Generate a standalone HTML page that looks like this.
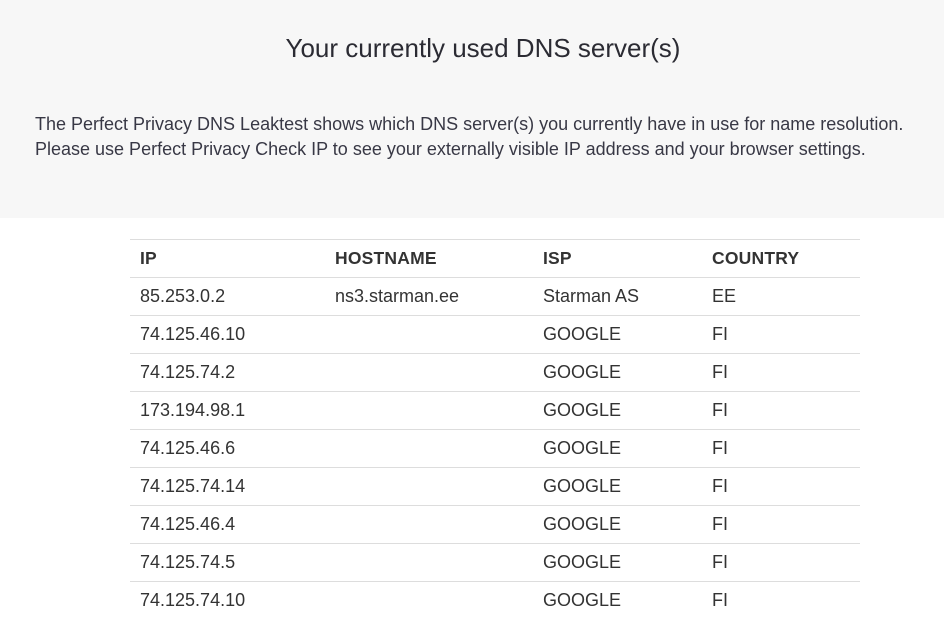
<!DOCTYPE html>
<html><head><style>
body{margin:0;background:#fff;font-family:"Liberation Sans",Arial,sans-serif;color:#333;width:944px;height:617px;overflow:hidden}
.top{background:#f7f7f7;height:218px;position:relative}
h1{position:absolute;top:31px;left:0;width:944px;text-align:center;margin:0;font-weight:normal;font-size:26px;color:#2b2b33;line-height:34px;padding-left:22px;box-sizing:border-box}
p{position:absolute;top:112px;left:35px;margin:0;font-size:18px;line-height:25px;color:#383845;white-space:nowrap}
table{position:absolute;top:239px;left:130px;width:730px;border-collapse:collapse;font-size:18px}
td,th{border-top:1px solid #ddd;height:37px;padding:0 0 0 10px;text-align:left;vertical-align:middle}
th{font-weight:bold;color:#333;font-size:17.5px;letter-spacing:0.2px}
td{color:#333}
</style></head><body>
<div class="top"><h1>Your currently used DNS server(s)</h1>
<p>The Perfect Privacy DNS Leaktest shows which DNS server(s) you currently have in use for name resolution.<br>Please use Perfect Privacy Check IP to see your externally visible IP address and your browser settings.</p></div>
<table>
<colgroup><col style="width:195px"><col style="width:208px"><col style="width:169px"><col></colgroup>
<tr><th>IP</th><th>HOSTNAME</th><th>ISP</th><th>COUNTRY</th></tr>
<tr><td>85.253.0.2</td><td>ns3.starman.ee</td><td>Starman AS</td><td>EE</td></tr>
<tr><td>74.125.46.10</td><td></td><td>GOOGLE</td><td>FI</td></tr>
<tr><td>74.125.74.2</td><td></td><td>GOOGLE</td><td>FI</td></tr>
<tr><td>173.194.98.1</td><td></td><td>GOOGLE</td><td>FI</td></tr>
<tr><td>74.125.46.6</td><td></td><td>GOOGLE</td><td>FI</td></tr>
<tr><td>74.125.74.14</td><td></td><td>GOOGLE</td><td>FI</td></tr>
<tr><td>74.125.46.4</td><td></td><td>GOOGLE</td><td>FI</td></tr>
<tr><td>74.125.74.5</td><td></td><td>GOOGLE</td><td>FI</td></tr>
<tr><td>74.125.74.10</td><td></td><td>GOOGLE</td><td>FI</td></tr>
</table>
</body></html>
